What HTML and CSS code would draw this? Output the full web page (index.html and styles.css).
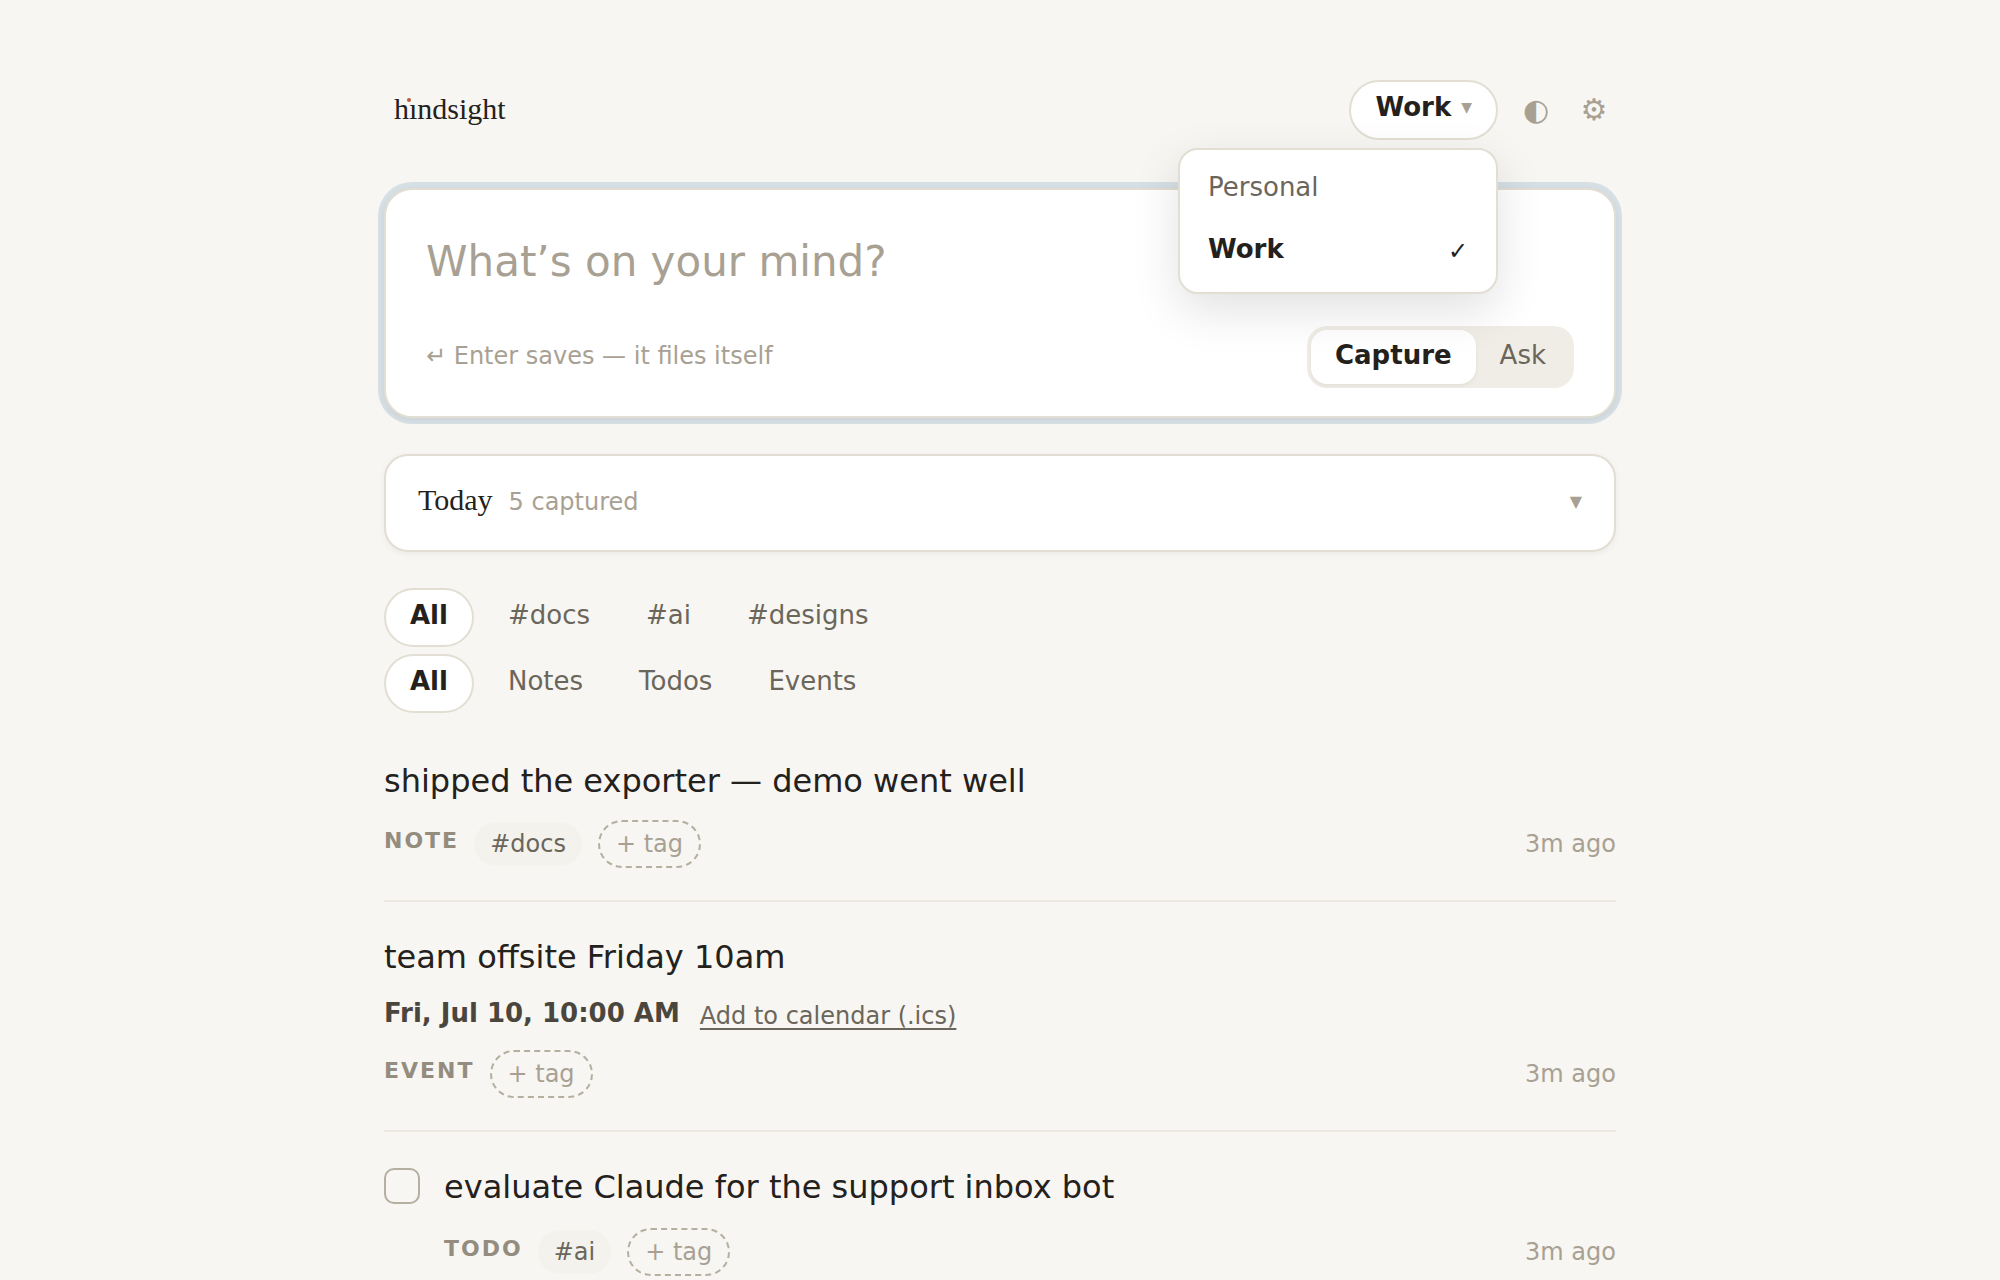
FILE: index.html
```html
<!DOCTYPE html>
<html lang="en">
<head>
    <meta charset="UTF-8">
    <meta name="viewport" content="width=device-width, initial-scale=1.0">
    <title>hindsight</title>
    <link rel="stylesheet" href="styles.css">
</head>
<body>
    <div class="container">
        <header class="topbar">
            <a class="logo" href="#">h<span class="logo-i">ı</span>ndsight</a>
            <div class="actions">
                <div class="space-switch">
                    <button type="button" class="space-button" aria-haspopup="menu" aria-expanded="true">Work <span class="caret">▼</span></button>
                    <div class="menu" role="menu">
                        <button type="button" class="menu-item" role="menuitem">Personal</button>
                        <button type="button" class="menu-item current" role="menuitem">Work <span class="check">✓</span></button>
                    </div>
                </div>
                <button type="button" class="icon-button" aria-label="Theme">◐</button>
                <button type="button" class="icon-button" aria-label="Settings">⚙</button>
            </div>
        </header>

        <form class="composer">
            <textarea class="composer-input" rows="1" aria-label="Capture" placeholder="What’s on your mind?"></textarea>
            <div class="composer-foot">
                <span class="hint">↵ Enter saves — it files itself</span>
                <div class="toggle">
                    <button type="button" class="toggle-option active">Capture</button>
                    <button type="button" class="toggle-option">Ask</button>
                </div>
            </div>
        </form>

        <button type="button" class="today" aria-expanded="false">
            <span class="today-title">Today</span>
            <span class="today-count">5 captured</span>
            <span class="today-caret">▼</span>
        </button>

        <nav class="filters">
            <div class="filter-row">
                <button type="button" class="filter active">All</button>
                <button type="button" class="filter">#docs</button>
                <button type="button" class="filter">#ai</button>
                <button type="button" class="filter">#designs</button>
            </div>
            <div class="filter-row">
                <button type="button" class="filter active">All</button>
                <button type="button" class="filter">Notes</button>
                <button type="button" class="filter">Todos</button>
                <button type="button" class="filter">Events</button>
            </div>
        </nav>

        <main class="entries">
            <article class="entry">
                <div class="entry-body">
                    <p class="entry-text">shipped the exporter — demo went well</p>
                    <div class="meta">
                        <span class="kind">NOTE</span>
                        <button type="button" class="tag">#docs</button>
                        <button type="button" class="tag add">+ tag</button>
                        <time class="time">3m ago</time>
                    </div>
                </div>
            </article>

            <article class="entry">
                <div class="entry-body">
                    <p class="entry-text">team offsite Friday 10am</p>
                    <div class="event">
                        <span class="event-date">Fri, Jul 10, 10:00 AM</span>
                        <a class="event-link" href="#">Add to calendar (.ics)</a>
                    </div>
                    <div class="meta">
                        <span class="kind">EVENT</span>
                        <button type="button" class="tag add">+ tag</button>
                        <time class="time">3m ago</time>
                    </div>
                </div>
            </article>

            <article class="entry">
                <input type="checkbox" class="entry-check" id="todo-1">
                <div class="entry-body">
                    <label class="entry-text" for="todo-1">evaluate Claude for the support inbox bot</label>
                    <div class="meta">
                        <span class="kind">TODO</span>
                        <button type="button" class="tag">#ai</button>
                        <button type="button" class="tag add">+ tag</button>
                        <time class="time">3m ago</time>
                    </div>
                </div>
            </article>
        </main>
    </div>
</body>
</html>
```

FILE: styles.css
```css
:root {
    --bg: #f7f6f2;
    --card: #ffffff;
    --line: #e2ded3;
    --line-soft: #ece8e0;
    --ink: #24211c;
    --text: #6b665b;
    --muted: #a8a193;
    --sans: "DejaVu Sans", sans-serif;
    --serif: "Liberation Serif", serif;
}
* {
    box-sizing: border-box;
}
body {
    margin: 0;
    background: var(--bg);
    color: var(--ink);
    font-family: var(--sans);
    font-size: 26px;
    line-height: 39px;
}
button {
    margin: 0;
    padding: 0;
    border: 0;
    background: none;
    color: inherit;
    font: inherit;
    cursor: pointer;
}
.container {
    max-width: 1312px;
    margin: 0 auto;
    padding: 80px 40px 0;
}

/* header */
.topbar {
    display: flex;
    justify-content: space-between;
    align-items: center;
    margin-bottom: 48px;
    padding-left: 10px;
}
.logo {
    padding-bottom: 4px;
    color: var(--ink);
    font-family: var(--serif);
    font-size: 30px;
    line-height: 45px;
    text-decoration: none;
}
.logo-i {
    position: relative;
}
.logo-i::after {
    content: "";
    position: absolute;
    top: 6px;
    left: -2px;
    width: 4px;
    height: 4px;
    border-radius: 50%;
    background: #b85c38;
}
.actions {
    display: flex;
    align-items: center;
    gap: 14px;
}
.space-switch {
    position: relative;
    margin-right: 2px;
}
.space-button {
    display: flex;
    align-items: center;
    gap: 10px;
    padding: 6px 24px 11px;
    border: 2px solid var(--line);
    border-radius: 30px;
    background: var(--card);
    font-weight: bold;
}
.caret {
    color: var(--muted);
    font-size: 14px;
    font-weight: normal;
}
.icon-button {
    width: 44px;
    padding-bottom: 2px;
    color: var(--muted);
    font-size: 30px;
}
.menu {
    position: absolute;
    top: 100%;
    right: 0;
    z-index: 10;
    width: 320px;
    margin-top: 8px;
    padding: 9px 8px;
    border: 2px solid var(--line);
    border-radius: 20px;
    background: var(--card);
    box-shadow: 0 16px 48px rgba(0, 0, 0, 0.12);
}
.menu-item {
    display: flex;
    justify-content: space-between;
    align-items: center;
    width: 100%;
    padding: 9px 20px 14px;
    color: var(--text);
}
.menu-item.current {
    color: var(--ink);
    font-weight: bold;
}
.check {
    padding-top: 4px;
    font-size: 24px;
    font-weight: normal;
    line-height: 35px;
}

/* composer */
.composer {
    margin-bottom: 36px;
    padding: 40px 40px 28px;
    border: 2px solid var(--line);
    border-radius: 28px;
    background: var(--card);
    box-shadow: 0 2px 6px rgba(0, 0, 0, 0.06), 0 0 0 6px #d6dfe4;
}
.composer-input {
    display: block;
    width: 100%;
    height: 63px;
    margin-bottom: 33px;
    padding: 0;
    border: 0;
    outline: 0;
    resize: none;
    overflow: hidden;
    background: none;
    color: var(--ink);
    font-family: inherit;
    font-size: 42px;
    line-height: 63px;
}
.composer-input::placeholder {
    color: var(--muted);
    opacity: 1;
}
.composer-foot {
    display: flex;
    justify-content: space-between;
    align-items: center;
}
.hint {
    padding-bottom: 2px;
    color: var(--muted);
    font-size: 24px;
    line-height: 36px;
}
.toggle {
    display: flex;
    padding: 4px;
    border-radius: 20px;
    background: #f0ede6;
}
.toggle-option {
    padding: 6px 24px 9px;
    border-radius: 16px;
    color: var(--text);
}
.toggle-option.active {
    background: var(--card);
    box-shadow: 0 2px 4px rgba(0, 0, 0, 0.06);
    color: var(--ink);
    font-weight: bold;
}

/* today */
.today {
    display: flex;
    align-items: baseline;
    gap: 16px;
    width: 100%;
    margin-bottom: 36px;
    padding: 21px 32px 28px;
    border: 2px solid var(--line);
    border-radius: 24px;
    background: var(--card);
    box-shadow: 0 2px 6px rgba(0, 0, 0, 0.05);
}
.today-title {
    font-family: var(--serif);
    font-size: 30px;
    line-height: 45px;
}
.today-count {
    color: var(--muted);
    font-size: 24px;
}
.today-caret {
    align-self: center;
    margin-left: auto;
    padding-top: 4px;
    color: var(--muted);
    font-size: 16px;
}

/* filters */
.filters {
    display: flex;
    flex-direction: column;
    gap: 7px;
    margin-bottom: 13px;
}
.filter-row {
    display: flex;
    flex-wrap: wrap;
    gap: 8px;
}
.filter {
    padding: 8px 24px 12px;
    border-radius: 30px;
    color: var(--text);
}
.filter.active {
    margin-right: 2px;
    padding: 6px 24px 10px;
    border: 2px solid var(--line);
    background: var(--card);
    color: var(--ink);
    font-weight: bold;
}

/* entries */
.entry {
    display: flex;
    gap: 24px;
    padding: 32px 0;
    border-bottom: 2px solid var(--line-soft);
}
.entry:last-child {
    border-bottom: 0;
}
.entry-body {
    flex: 1;
}
.entry-text {
    display: block;
    margin: 0;
    font-size: 32px;
    line-height: 46px;
}
.entry-check {
    appearance: none;
    width: 36px;
    height: 36px;
    margin: 4px 0 0;
    border: 2px solid #b5af9f;
    border-radius: 10px;
}
.event {
    display: flex;
    align-items: center;
    gap: 20px;
    margin-top: 14px;
    margin-bottom: -3px;
}
.event-date {
    padding-bottom: 4px;
    color: #4a463d;
    font-weight: bold;
}
.event-link {
    color: var(--text);
    font-size: 24px;
    line-height: 36px;
    text-underline-offset: 4px;
}
.meta {
    display: flex;
    align-items: center;
    gap: 16px;
    margin-top: 16px;
}
.entry-check + .entry-body .meta {
    margin-top: 18px;
}
.kind {
    margin-right: -1px;
    padding-bottom: 7px;
    color: #948d7f;
    font-size: 22px;
    font-weight: bold;
    letter-spacing: 2px;
    line-height: 33px;
}
.tag {
    padding: 4px 16px;
    border-radius: 24px;
    background: #f3f2ed;
    color: var(--text);
    font-size: 24px;
    line-height: 36px;
}
.tag.add {
    border: 2px dashed #b5af9f;
    background: none;
    color: var(--muted);
}
.time {
    margin-left: auto;
    color: var(--muted);
    font-size: 24px;
    line-height: 36px;
}
```
